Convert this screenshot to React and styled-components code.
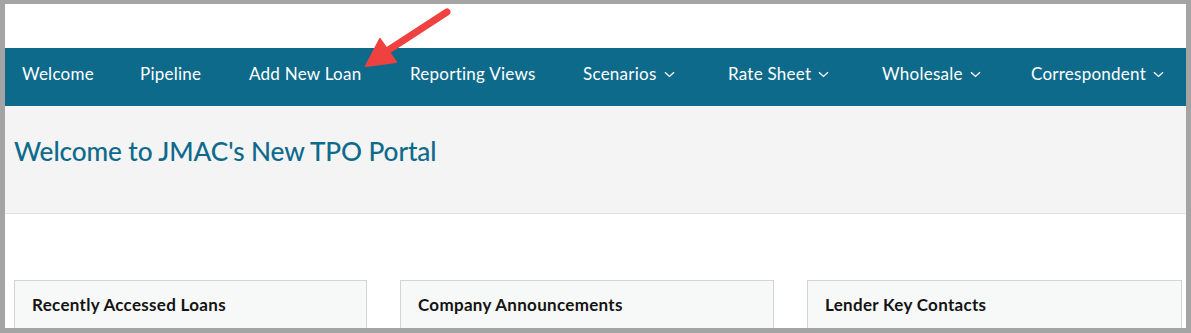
import React from "react";
import styled, { createGlobalStyle } from "styled-components";

const GlobalStyle = createGlobalStyle`
	html, body {
		margin: 0;
		padding: 0;
		background: #a4a4a4;
	}
	* {
		box-sizing: border-box;
	}
`;

// widths measured from the start of one tab to the start of the next
const navItems = [
	{ label: "Welcome", width: 118 },
	{ label: "Pipeline", width: 109 },
	{ label: "Add New Loan", width: 161 },
	{ label: "Reporting Views", width: 173 },
	{ label: "Scenarios", width: 145, menu: true },
	{ label: "Rate Sheet", width: 154, menu: true },
	{ label: "Wholesale", width: 149, menu: true },
	{ label: "Correspondent", menu: true }
];

const cards = ["Recently Accessed Loans", "Company Announcements", "Lender Key Contacts"];

function Chevron() {
	return (
		<svg width="11" height="7" viewBox="0 0 11 7" fill="none">
			<path d="M1 1.2L5.5 5.4L10 1.2" stroke="#ffffff" strokeWidth="1.4" />
		</svg>
	);
}

function PointerArrow() {
	return (
		<ArrowSvg width="110" height="72" viewBox="0 0 110 72">
			<path d="M102 8L42 47" stroke="#f04141" strokeWidth="7" strokeLinecap="round" />
			<path d="M21 62L35 35L51 58Z" fill="#f04141" stroke="#f04141" strokeWidth="2" strokeLinejoin="round" />
		</ArrowSvg>
	);
}

function App() {
	return (
		<Frame>
			<GlobalStyle />
			<Page>
				<TopStrip />
				<NavBar>
					{navItems.map((item) => (
						<NavItem key={item.label} $width={item.width}>
							<NavLabel>{item.label}</NavLabel>
							{item.menu && <Chevron />}
						</NavItem>
					))}
				</NavBar>
				<Banner>
					<Title>Welcome to JMAC's New TPO Portal</Title>
				</Banner>
				<Content>
					<CardRow>
						{cards.map((c) => (
							<Card key={c}>
								<CardTitle>{c}</CardTitle>
							</Card>
						))}
					</CardRow>
				</Content>
				<PointerArrow />
			</Page>
		</Frame>
	);
}

export default App;

const Frame = styled.div`
	width: 1191px;
	height: 333px;
	padding: 4px 5px 5px 5px;
	background: #a4a4a4;
	overflow: hidden;
`;

const Page = styled.div`
	position: relative;
	height: 100%;
	background: #ffffff;
	overflow: hidden;
	font-family: Lato, "Open Sans", "Liberation Sans", sans-serif;
`;

const TopStrip = styled.div`
	height: 44px;
`;

const NavBar = styled.nav`
	height: 58px;
	background: #0e6a8b;
	display: flex;
	align-items: center;
	padding: 0 0 6px 17px;
`;

const NavItem = styled.div`
	flex: ${(p) => (p.$width ? `0 0 ${p.$width}px` : "1")};
	display: flex;
	align-items: center;
	gap: 7px;
	color: #ffffff;
	font-size: 17px;
	line-height: 20px;
	white-space: nowrap;
`;

const NavLabel = styled.span`
	letter-spacing: 0.25px;
`;

const Banner = styled.div`
	height: 108px;
	background: #f4f4f4;
	border-bottom: 1px solid #e2e2e2;
	display: flex;
	align-items: center;
	padding-left: 9px;
`;

const Title = styled.h1`
	margin: -18px 0 0 0;
	color: #0e6a8b;
	font-size: 26.2px;
	font-weight: 500;
	letter-spacing: -0.1px;
`;

const Content = styled.div`
	padding: 66px 0 0 9px;
`;

const CardRow = styled.div`
	display: grid;
	grid-template-columns: 353px 374px 375px;
	gap: 33px;
`;

const Card = styled.div`
	height: 80px;
	background: #f7f8f8;
	border: 1px solid #d4d4d4;
	padding: 13px 17px;
`;

const CardTitle = styled.div`
	color: #141414;
	font-size: 17px;
	font-weight: 700;
	letter-spacing: 0.3px;
`;

const ArrowSvg = styled.svg`
	position: absolute;
	left: 340px;
	top: 0;
`;
